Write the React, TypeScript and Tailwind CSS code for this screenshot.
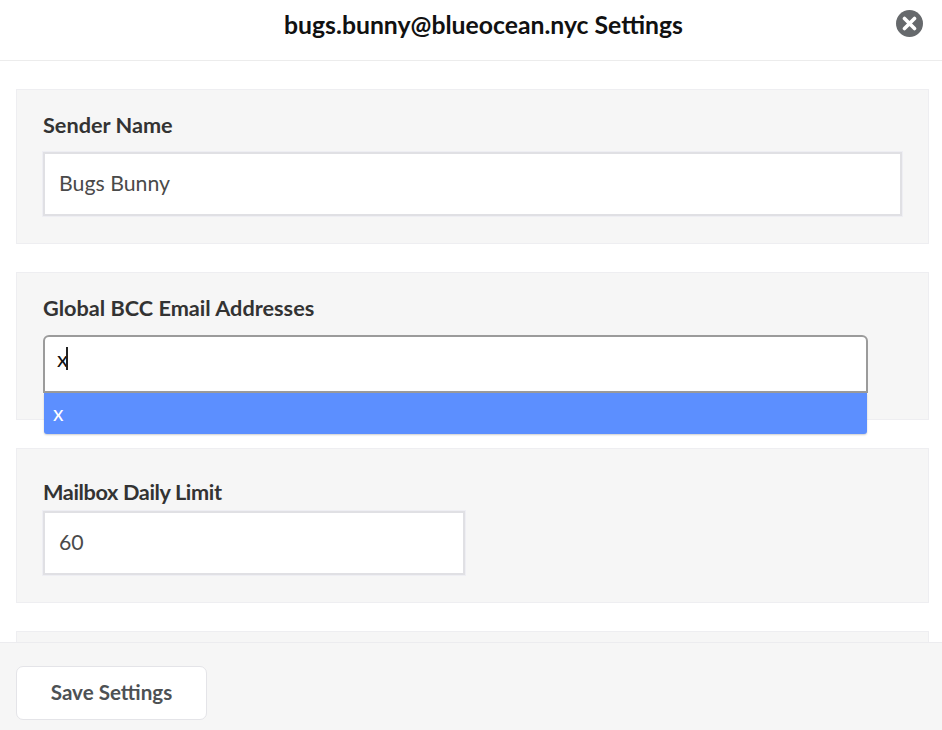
import React from 'react'

function Card({ label, className, labelClassName = '', children }: { label: string; className: string; labelClassName?: string; children: React.ReactNode }) {
  return (
    <section className={`border border-[#eeeef1] bg-[#f6f6f6] px-[26px] ${className}`}>
      <label className={`block text-[21.7px] leading-[24px] font-bold text-[#333333] ${labelClassName}`}>{label}</label>
      {children}
    </section>
  )
}

const fieldClass =
  'block h-[64px] border-2 border-[#e0e0e4] bg-white px-[14px] pb-[2px] text-[21.3px] text-[#4a4a4a] outline-none shadow-[0_0_0_1px_#eeeef3]'

export default function App() {
  return (
    <div className="flex h-[730px] w-[942px] flex-col overflow-hidden bg-white font-['Lato','Open_Sans',sans-serif]">
      <header className="relative flex h-[61px] shrink-0 items-center justify-center border-b border-[#ececec] pb-[10px] pl-[25px]">
        <h1 className="text-[24.75px] font-bold text-[#111111]">bugs.bunny@blueocean.nyc Settings</h1>
        <button type="button" aria-label="Close" className="absolute top-[10px] right-[19px] flex h-[27px] w-[27px] items-center justify-center rounded-full bg-[#66696c]">
          <svg width="15" height="15" viewBox="0 0 15 15" aria-hidden="true">
            <path d="M2.5 2.5 12.5 12.5M12.5 2.5 2.5 12.5" stroke="#ffffff" strokeWidth="3.6" strokeLinecap="round" />
          </svg>
        </button>
      </header>

      <main className="flex min-h-0 flex-1 flex-col gap-[28px] overflow-hidden px-[16px] pt-[28px] pr-[13px]">
        <Card label="Sender Name" className="shrink-0 pt-[23px] pb-[27px]">
          <input readOnly defaultValue="Bugs Bunny" className={`${fieldClass} mt-[15px] w-[859px]`} />
        </Card>

        <Card label="Global BCC Email Addresses" className="relative z-10 shrink-0 pt-[23px] pb-[26px]">
          <div className="relative mt-[15px] w-[825px]">
            <div className="relative h-[58px] rounded-t-[6px] border-2 border-[#9b9b9b] bg-white pt-[9px] pl-[12px] text-[22px] leading-[26px] text-[#111111]">
              <span>x</span>
              <span className="absolute top-[10px] left-[21px] h-[23px] w-[2px] bg-[#222222]" />
            </div>
            <div className="absolute top-[58px] right-[1px] left-[1px] h-[41px] rounded-b-[3px] bg-[#5c8fff] pl-[9px] text-[21px] leading-[39px] text-white shadow-[0_1px_2px_rgba(0,0,0,0.2)]">
              x
            </div>
          </div>
        </Card>

        <Card label="Mailbox Daily Limit" labelClassName="tracking-[-0.38px]" className="shrink-0 pt-[31px] pb-[27px]">
          <input readOnly defaultValue="60" className={`${fieldClass} mt-[7px] w-[422px]`} />
        </Card>

        <section className="h-[60px] shrink-0 border border-[#eeeef1] bg-[#f6f6f6]" />
      </main>

      <footer className="flex h-[88px] shrink-0 items-start border-t border-[#ececef] bg-[#f6f6f6] px-[16px] pt-[23px]">
        <button type="button" className="h-[54px] w-[191px] rounded-[7px] border border-[#e4e4e8] bg-white pb-[2px] text-[20.6px] font-bold text-[#4d5154]">
          Save Settings
        </button>
      </footer>
    </div>
  )
}
